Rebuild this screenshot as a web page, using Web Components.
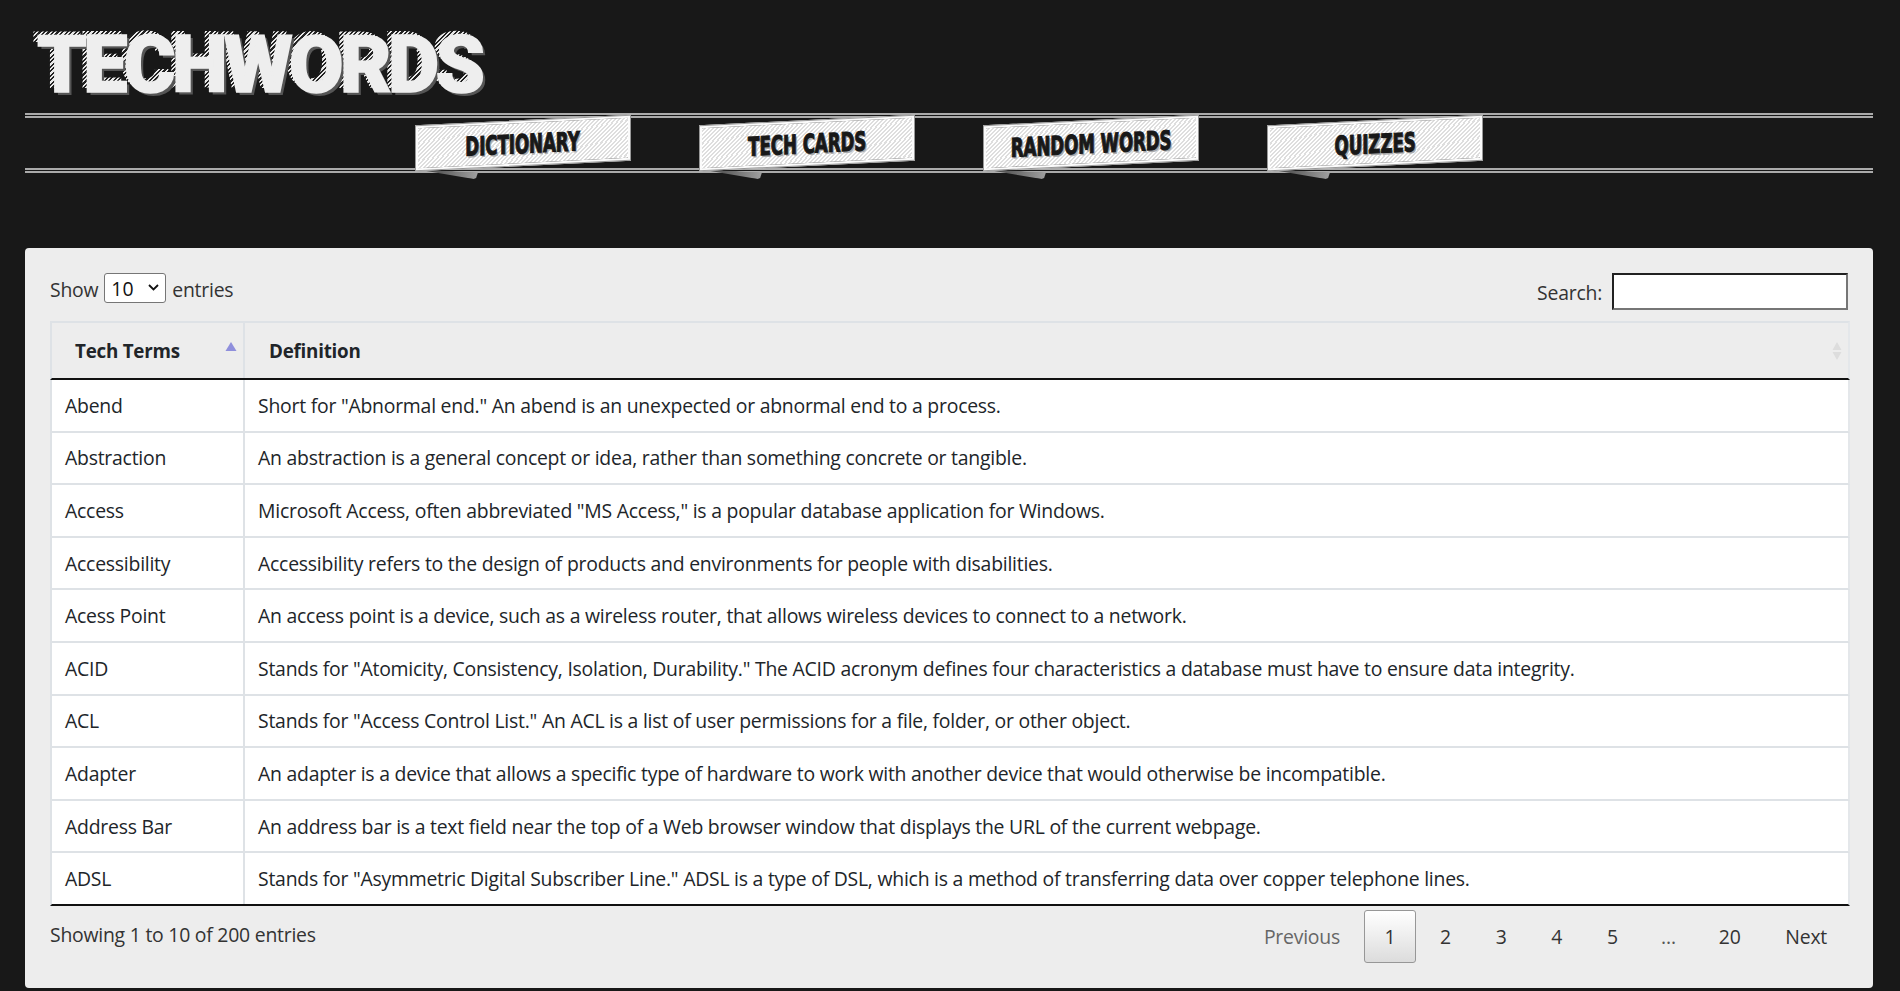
<!doctype html>
<html lang="en">
<head>
<meta charset="utf-8">
<title>TechWords</title>
<style>
html,body{margin:0;background:#181818}
body{width:1900px;height:991px;overflow:hidden;font-family:"Open Sans","Noto Sans",sans-serif}
</style>
</head>
<body>
<tw-logo>TECHWORDS</tw-logo>
<tw-nav>
  <tw-tab>DICTIONARY</tw-tab>
  <tw-tab>TECH CARDS</tw-tab>
  <tw-tab>RANDOM WORDS</tw-tab>
  <tw-tab>QUIZZES</tw-tab>
</tw-nav>
<tw-card>
  <tw-controls></tw-controls>
  <tw-table>
    <tw-row term="Abend">Short for "Abnormal end." An abend is an unexpected or abnormal end to a process.</tw-row>
    <tw-row term="Abstraction">An abstraction is a general concept or idea, rather than something concrete or tangible.</tw-row>
    <tw-row term="Access">Microsoft Access, often abbreviated "MS Access," is a popular database application for Windows.</tw-row>
    <tw-row term="Accessibility">Accessibility refers to the design of products and environments for people with disabilities.</tw-row>
    <tw-row term="Acess Point">An access point is a device, such as a wireless router, that allows wireless devices to connect to a network.</tw-row>
    <tw-row term="ACID">Stands for "Atomicity, Consistency, Isolation, Durability." The ACID acronym defines four characteristics a database must have to ensure data integrity.</tw-row>
    <tw-row term="ACL">Stands for "Access Control List." An ACL is a list of user permissions for a file, folder, or other object.</tw-row>
    <tw-row term="Adapter">An adapter is a device that allows a specific type of hardware to work with another device that would otherwise be incompatible.</tw-row>
    <tw-row term="Address Bar">An address bar is a text field near the top of a Web browser window that displays the URL of the current webpage.</tw-row>
    <tw-row term="ADSL" last>Stands for "Asymmetric Digital Subscriber Line." ADSL is a type of DSL, which is a method of transferring data over copper telephone lines.</tw-row>
  </tw-table>
  <tw-footer></tw-footer>
</tw-card>
<script>
const TEXT = `font-family:"Open Sans","Noto Sans",sans-serif;font-size:19.4px;letter-spacing:-.23px;`;
function def(name, html, init){
  customElements.define(name, class extends HTMLElement{
    constructor(){super();this.attachShadow({mode:'open'}).innerHTML=typeof html==='function'?html(this):html;}
    connectedCallback(){ if(init) init(this); }
  });
}
def('tw-logo',`<style>
:host{display:block;height:113px;box-sizing:border-box;padding:18px 0 0 37px}
.t{position:relative;display:inline-block;font:900 79px/1.2 Roboto,"Liberation Sans",sans-serif;letter-spacing:-3.6px;color:#eee;text-shadow:3px 3px 0 #555;-webkit-text-stroke:1.6px #eee}
.t::before{content:"TECHWORDS";position:absolute;left:-5px;top:-4px;z-index:-1;color:transparent;-webkit-text-stroke:0;text-shadow:none;background:repeating-linear-gradient(135deg,#e8e8e8 0 1.6px,#222 1.6px 3.2px);-webkit-background-clip:text;background-clip:text}
.w{position:relative;z-index:0;display:inline-block}
</style><div class="w"><span class="t"><slot></slot></span></div>`);
def('tw-nav',`<style>
:host{display:flex;justify-content:center;align-items:center;gap:68px;width:1848px;height:60px;margin-left:25px;box-sizing:border-box;border-top:5px double #aaa;border-bottom:5px double #aaa}
</style><slot></slot>`);
def('tw-tab',`<style>
:host{display:block;position:relative;width:216px;height:46px;flex:none;transform:skewY(-2.8deg)}
.f{position:absolute;left:1px;top:44px;width:62px;height:7px;background:linear-gradient(90deg,#333,#a0a0a0);clip-path:polygon(0 0,100% 0,97% 85%,93% 100%);transform:skewY(5.5deg);transform-origin:0 0}
.b{position:relative;box-sizing:border-box;height:100%;display:flex;align-items:center;justify-content:center;border:3px solid #fbfbfb;outline:1px solid #999;outline-offset:-1px;background:repeating-linear-gradient(135deg,#fff 0 1.5px,#dedede 1.5px 3px)}
.x{display:inline-block;white-space:nowrap;font:700 26px/1 "Liberation Sans Narrow","DejaVu Sans Condensed","Liberation Sans",sans-serif;color:#181818;-webkit-text-stroke:1.1px #181818;text-shadow:2px 2px 0 #aaa;transform:scaleX(.71) translateY(1px)}
</style><div class="f"></div><div class="b"><span class="x"><slot></slot></span></div>`);
def('tw-card',`<style>
:host{display:block;width:1848px;height:740px;margin:75px 0 0 25px;box-sizing:border-box;padding:25px 23px 0 25px;background:#ededed;border-radius:4px}
</style><slot></slot>`);
def('tw-controls',`<style>
:host{display:flex;justify-content:space-between;height:48px;color:#333;${TEXT}}
.l{display:flex;align-items:center;height:30px;gap:6px;padding-top:1px}
.sel{position:relative;display:block;width:62px;height:30px;margin-top:-2px}
select{appearance:none;-webkit-appearance:none;box-sizing:border-box;width:100%;height:100%;font:inherit;letter-spacing:0;background:#fff;color:#111;border:1px solid #767676;border-radius:3px;padding:0 0 0 6px;display:block}
.sel svg{position:absolute;right:7px;top:11px;pointer-events:none}
.r{display:flex;align-items:center;height:37px;gap:10px;margin-right:2px;padding-top:1px}
input{box-sizing:border-box;width:236px;height:37px;border:2px inset #767676;background:#fff;padding:0;margin:-2px 0 0}
</style><div class="l">Show <span class="sel"><select><option>10</option></select><svg width="11" height="7" viewBox="0 0 11 7"><path d="M1 1l4.500 4.500L10 1" fill="none" stroke="#111" stroke-width="1.800"/></svg></span> entries</div><div class="r">Search: <input type="text"></div>`);
def('tw-table',`<style>
:host{display:block;width:1800px;color:#212529;${TEXT}}
.h{display:grid;grid-template-columns:191px 1fr;height:59px;box-sizing:border-box;border-top:2px solid #dee2e6;border-left:2px solid #dee2e6;border-right:2px solid #e4e7ea;border-bottom:2px solid #111;font-weight:700;font-size:18.8px;padding-top:1px}
.c{display:flex;align-items:center;justify-content:space-between;padding:0 6px 0 23px}
.c+.c{border-left:2px solid #dee2e6;padding:0 5px 0 24px;margin-top:-1px}
svg{display:block}
</style><div class="h"><div class="c"><span>Tech Terms</span><svg width="12" height="10" viewBox="0 0 12 10" style="margin:-8px 0 0 0"><path d="M6 0l5.500 9H.5z" fill="#8f8fdc"/></svg></div><div class="c"><span>Definition</span><svg width="12" height="20" viewBox="0 0 12 20"><path d="M6 1l4.500 8h-9zM6 19l-4.500-8h9z" fill="#ddd"/></svg></div></div><slot></slot>`);
def('tw-row',el=>`<style>
:host{display:grid;grid-template-columns:191px 1fr;height:52.6px;box-sizing:border-box;background:#fff;border-left:2px solid #dee2e6;border-right:2px solid #e4e7ea;border-bottom:2px solid #dee2e6}
:host([last]){border-bottom-color:#111}
div{display:flex;align-items:center;padding:0 14px 0 13px;white-space:nowrap}
div+div{border-left:2px solid #dee2e6;padding-left:13px}
</style><div>${el.getAttribute('term')}</div><div><slot></slot></div>`);
def('tw-footer',`<style>
:host{display:flex;justify-content:space-between;height:53px;margin-top:4px;color:#333;${TEXT}}
.s{align-self:center;margin-top:-3px}
.p{display:flex;align-items:stretch;gap:2.800px;margin-right:2px}
a{display:flex;align-items:center;box-sizing:border-box;padding:0 20px;border:1px solid transparent;border-radius:3px}
.d{color:#666}
.on{width:52.500px;justify-content:center;padding:0;background:linear-gradient(#fff,#dcdcdc);border-color:#979797}
.e{width:53.400px;justify-content:center;padding:0;color:#555}
</style><div class="s">Showing 1 to 10 of 200 entries</div><div class="p"><a class="d">Previous</a><a class="on">1</a><a>2</a><a>3</a><a>4</a><a>5</a><a class="e">…</a><a>20</a><a>Next</a></div>`);
</script>
</body>
</html>
